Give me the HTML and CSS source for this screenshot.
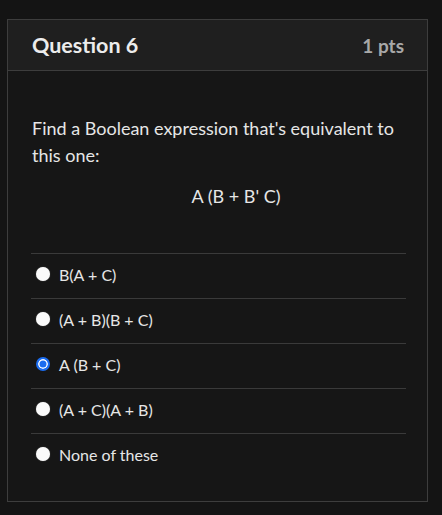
FILE: index.html
```html
<!DOCTYPE html>
<html lang="en">
<head>
    <meta charset="UTF-8">
    <meta name="viewport" content="width=device-width, initial-scale=1.0">
    <title>Question 6</title>
    <link rel="stylesheet" href="styles.css">
</head>
<body>
    <div class="question-card">
        <div class="question-header">
            <h2>Question 6</h2>
            <span class="points">1 pts</span>
        </div>
        <div class="question-body">
            <p class="prompt">Find a Boolean expression that's equivalent to this one:</p>
            <p class="expression">A (B + B' C)</p>
            <div class="answers">
                <label class="answer"><input type="radio" name="q6"> B(A + C)</label>
                <label class="answer"><input type="radio" name="q6"> (A + B)(B + C)</label>
                <label class="answer"><input type="radio" name="q6" checked> A (B + C)</label>
                <label class="answer"><input type="radio" name="q6"> (A + C)(A + B)</label>
                <label class="answer"><input type="radio" name="q6"> None of these</label>
            </div>
        </div>
    </div>
</body>
</html>
```

FILE: styles.css
```css
body {
    margin: 0;
    padding: 19px 0 0 7px;
    background-color: #141414;
    color: #e6e6e6;
    font-family: Lato, "Open Sans", sans-serif;
}
.question-card {
    width: 419px;
    border: 1px solid #3d3d3d;
    background-color: #161616;
}
.question-header {
    display: flex;
    justify-content: space-between;
    align-items: center;
    height: 52px;
    margin-top: -1px;
    padding: 0 23px 0 24px;
    box-sizing: border-box;
    background-color: #1f1f1f;
    border-top: 1px solid #3d3d3d;
    border-bottom: 1px solid #3d3d3d;
}
.question-header h2 {
    margin: 0;
    font-size: 21.5px;
    font-weight: bold;
    color: #ececec;
}
.points {
    font-size: 19px;
    font-weight: bold;
    color: #a8a8a8;
}
.question-body {
    padding: 44px 21px 23px 23px;
}
.prompt {
    margin: 0 0 0 1px;
    font-size: 18px;
    line-height: 27px;
}
.expression {
    margin: 14px 0 0;
    padding-left: 35px;
    font-size: 18px;
    line-height: 27px;
    text-align: center;
}
.answers {
    margin-top: 43px;
}
.answer {
    display: flex;
    align-items: center;
    height: 45px;
    padding-bottom: 4px;
    box-sizing: border-box;
    border-top: 1px solid #3a3a3a;
    font-size: 16px;
    cursor: pointer;
}
.answer input {
    appearance: none;
    width: 14px;
    height: 14px;
    margin: 0 9px 0 5px;
    border-radius: 50%;
    background-color: #fafafa;
    box-shadow: 0 0 1px #888;
}
.answer input:checked {
    background-color: #1a6cf0;
    border: 2px solid #1a6cf0;
    box-shadow: inset 0 0 0 1.5px #ffffff;
}
```
